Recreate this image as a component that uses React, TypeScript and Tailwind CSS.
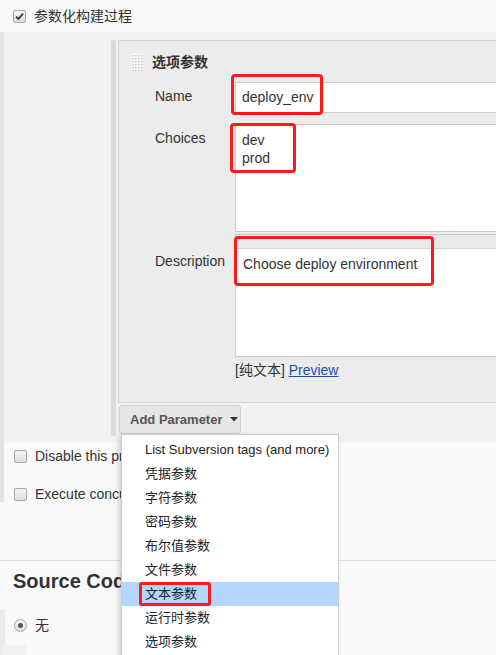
import React from 'react';

const font = {fontFamily: '"Liberation Sans", Arial, "Noto Sans CJK SC", sans-serif'};

const CheckBox = ({checked}: { checked?: boolean }) => (
	<span className="inline-flex w-[13px] h-[13px] shrink-0 items-center justify-center rounded-[2px] border border-[#a9a9a9] bg-gradient-to-b from-[#f4f4f4] to-[#dedede]">
		{checked && (
			<svg width="9" height="9" viewBox="0 0 9 9">
				<path d="M1 4.6 L3.4 7 L8 1.6" stroke="#333" strokeWidth="1.8" fill="none"/>
			</svg>
		)}
	</span>
);

const Grip = () => (
	<svg width="12" height="18" viewBox="0 0 12 18" className="shrink-0">
		<rect width="12" height="18" fill="#fafafa"/>
		{[0, 1, 2, 3].map(c => [0, 1, 2, 3, 4, 5].map(r => (
			<rect key={`${c}-${r}`} x={c * 3 + 1} y={r * 3 + 1} width="1.5" height="1.5" fill="#c4c4c4"/>
		)))}
	</svg>
);

const RedBox = ({className}: { className: string }) => (
	<div className={`absolute border-[3px] border-[#ff1a1a] rounded-[4px] pointer-events-none ${className}`}/>
);

const menuItems = [
	'List Subversion tags (and more)',
	'凭据参数',
	'字符参数',
	'密码参数',
	'布尔值参数',
	'文件参数',
	'文本参数',
	'运行时参数',
	'选项参数',
];

const App = () => {
	return (
		<div className="relative w-[496px] h-[655px] overflow-hidden bg-[#f9f9f9] text-[#333]" style={font}>
			{/* top checkbox */}
			<div className="h-8 flex items-center pl-[13px] text-[14px]">
				<CheckBox checked/>
				<span className="ml-2">参数化构建过程</span>
			</div>

			<div className="border-l-4 border-[#e3e3e3]">
				<div className="bg-[#f2f2f2] pt-2 pb-[6px] pl-[107px]">
					<div className="border-l-[5px] border-[#dcdcdc] pl-[2px] pb-[2px]">
						<div className="w-[420px] h-[363px] border border-[#d2d2d2] bg-[#ececec]">
							<div className="flex items-center pt-[11px] pl-3">
								<Grip/>
								<span className="ml-[9px] text-[14px] font-bold">选项参数</span>
							</div>

							<div className="relative grid grid-cols-[80px_1fr] pl-9 mt-[9px] text-[14px]">
								<div className="pt-[4px]">Name</div>
								<div className="h-[31px] bg-white border border-[#c8c8c8] flex items-center pl-[6px]">deploy_env</div>

								<div className="pt-[4px] mt-[11px]">Choices</div>
								<div className="mt-[11px] h-[108px] bg-white border border-[#c8c8c8] pl-[6px] pt-[6px] leading-[18px]">
									<div>dev</div>
									<div>prod</div>
								</div>

								<div className="pt-[19px]">Description</div>
								<div className="mt-[2px]">
									<div className="h-[15px] bg-[#e9e9e9] border-t border-[#c9c9c9] border-b border-b-[#d6d6d6]"/>
									<div className="h-[107px] bg-white border-x border-[#d0d0d0] pl-[7px] pt-[5px]">Choose deploy environment</div>
									<div className="h-[5px] bg-[#e9e9e9] border-t border-[#c9c9c9]"/>
									<div className="leading-[18px]">
										[纯文本] <span className="text-[#1f4fa8] underline">Preview</span>
									</div>
								</div>
							</div>
						</div>
						<button className="mt-[2px] ml-[1px] h-[29px] w-[122px] flex items-center pl-[10px] rounded-[3px] border border-[#cfcfcf] bg-[#e6e6e6] text-[13px] font-bold text-[#555] whitespace-nowrap">
							Add Parameter
							<svg width="8" height="5" viewBox="0 0 8 5" className="ml-[8px] shrink-0">
								<path d="M0 0 H8 L4 4.5 Z" fill="#333"/>
							</svg>
						</button>
					</div>
				</div>

				<div className="pt-[6px] pl-[10px] text-[14px] flex flex-col gap-[22px]">
					<div className="flex items-center h-4">
						<CheckBox/>
						<span className="ml-2">Disable this project</span>
					</div>
					<div className="flex items-center h-4">
						<CheckBox/>
						<span className="ml-2">Execute concurrent builds if necessary</span>
					</div>
				</div>
			</div>

			<div className="h-[58px]"/>
			<div className="border-t border-[#e0e0e0] pt-[8px] pl-[13px]">
				<h2 className="text-[20px] leading-6 font-bold text-[#333]">Source Code Management</h2>
			</div>
			<div className="mt-[16px] border-l-[5px] border-[#ececec] h-[47px] pl-[9px] pt-[6px]">
				<div className="flex items-center text-[14px]">
					<span className="w-[13px] h-[13px] rounded-full border border-[#a9a9a9] bg-gradient-to-b from-[#f4f4f4] to-[#dedede] flex items-center justify-center">
						<span className="w-[5px] h-[5px] rounded-full bg-[#555]"/>
					</span>
					<span className="ml-2">无</span>
				</div>
				<div className="mt-[9px] -ml-[12px] w-[24px] h-[10px] bg-[#f1f1f1]"/>
			</div>

			{/* annotations */}
			<RedBox className="left-[231px] top-[74px] w-[92px] h-[41px]"/>
			<RedBox className="left-[230px] top-[123px] w-[66px] h-[50px]"/>
			<RedBox className="left-[234px] top-[236px] w-[200px] h-[50px]"/>

			{/* dropdown menu */}
			<div className="absolute left-[121px] top-[434px] w-[218px] h-[240px] bg-white border border-[#cccccc] shadow-[-2px_2px_5px_rgba(0,0,0,0.18)] pt-[3px] text-[13px] text-[#222]">
				{menuItems.map((item, i) => (
					<div key={item}
						 className={`relative h-6 flex items-center pl-[23px] ${i === 6 ? 'bg-[#b4d5fe]' : ''}`}>
						{item}
						{i === 6 && <div className="absolute left-[17px] top-0 w-[72px] h-[24px] border-[3px] border-[#ff1a1a] rounded-[3px]"/>}
					</div>
				))}
			</div>
		</div>
	);
};

export default App;
